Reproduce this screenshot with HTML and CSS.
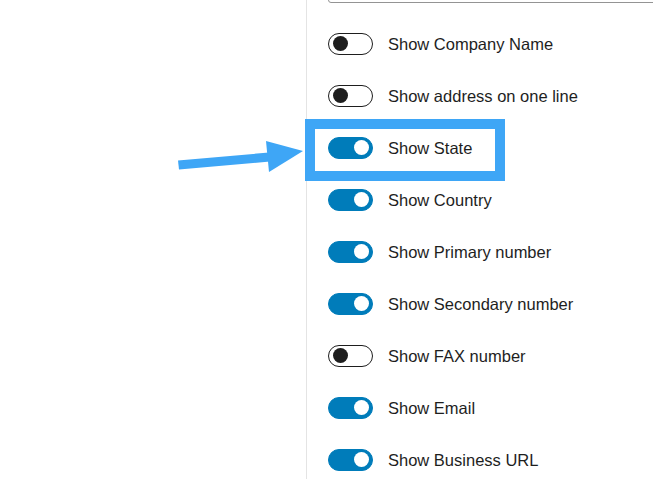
FILE: index.html
```html
<!DOCTYPE html>
<html>
<head>
<title>Address Settings</title>
<link rel="stylesheet" href="styles.css">
</head>
<body>

<div class="page">
    <div class="gutter"></div>

    <!-- Settings sidebar -->
    <div class="panel">
        <div class="text-field"></div>

        <div class="toggle-list">
            <div class="toggle-row">
                <span class="toggle"></span>
                <span class="label">Show Company Name</span>
            </div>
            <div class="toggle-row">
                <span class="toggle"></span>
                <span class="label">Show address on one line</span>
            </div>
            <div class="toggle-row">
                <span class="toggle is-on"></span>
                <span class="label">Show State</span>
            </div>
            <div class="toggle-row">
                <span class="toggle is-on"></span>
                <span class="label">Show Country</span>
            </div>
            <div class="toggle-row">
                <span class="toggle is-on"></span>
                <span class="label">Show Primary number</span>
            </div>
            <div class="toggle-row">
                <span class="toggle is-on"></span>
                <span class="label">Show Secondary number</span>
            </div>
            <div class="toggle-row">
                <span class="toggle"></span>
                <span class="label">Show FAX number</span>
            </div>
            <div class="toggle-row">
                <span class="toggle is-on"></span>
                <span class="label">Show Email</span>
            </div>
            <div class="toggle-row">
                <span class="toggle is-on"></span>
                <span class="label">Show Business URL</span>
            </div>
        </div>
    </div>

    <!-- Annotation: arrow and highlight box -->
    <svg class="arrow" width="306" height="479" viewBox="0 0 306 479">
        <polygon points="178,160.5 269,152.5 270,161.5 179,169.5" fill="#3ea6f6"/>
        <polygon points="266,141 303,151 269,172" fill="#3ea6f6"/>
    </svg>
    <div class="highlight"></div>
</div>

</body>
</html>
```

FILE: styles.css
```css
body {
    margin: 0;
    background: #fff;
    font-family: "Liberation Sans", Arial, sans-serif;
    color: #1e1e1e;
}

.page {
    position: relative;
    display: flex;
    width: 653px;
    height: 479px;
    overflow: hidden;
}

.gutter {
    width: 306px;
    flex-shrink: 0;
}

.panel {
    flex: 1;
    border-left: 1px solid #e4e4e4;
    padding-left: 21px;
    overflow: hidden;
}

.text-field {
    width: 420px;
    height: 32px;
    margin-top: -31px;
    border: 1px solid #949494;
    border-radius: 3px;
}

.toggle-list {
    margin-top: 15px;
}

.toggle-row {
    display: flex;
    align-items: center;
    gap: 15px;
    height: 52px;
}

.toggle {
    position: relative;
    box-sizing: border-box;
    width: 45px;
    height: 22px;
    border: 1.5px solid #1e1e1e;
    border-radius: 11px;
    background: #fff;
    flex-shrink: 0;
}

.toggle::after {
    content: "";
    position: absolute;
    top: 2px;
    left: 3.5px;
    width: 15px;
    height: 15px;
    border-radius: 50%;
    background: #1e1e1e;
}

.toggle.is-on {
    border-color: #007cba;
    background: #007cba;
}

.toggle.is-on::after {
    left: auto;
    right: 3px;
    background: #fff;
}

.label {
    font-size: 16.5px;
    line-height: 20px;
}

.arrow {
    position: absolute;
    left: 0;
    top: 0;
}

.highlight {
    position: absolute;
    left: 305px;
    top: 119px;
    width: 180px;
    height: 42px;
    border: 10px solid #3ea6f6;
}
```
